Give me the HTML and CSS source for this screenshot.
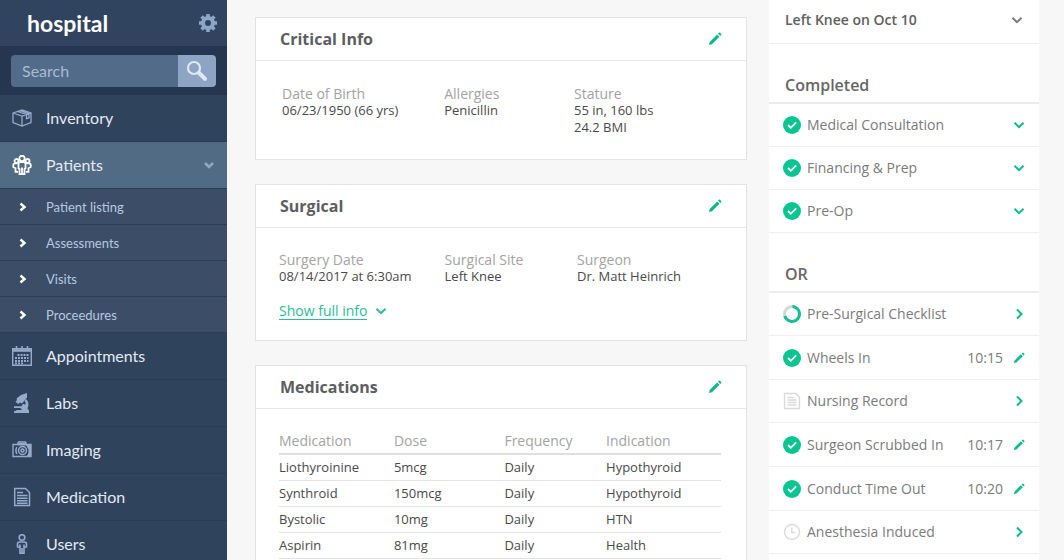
FILE: index.html
```html
<!DOCTYPE html>
<html lang="en">

<head>
	<meta charset="UTF-8">
	<meta name="viewport" content="width=device-width, initial-scale=1">
	<title>hospital</title>
	<link rel="stylesheet" href="styles.css">
</head>

<body>
	<!-- Shared icons -->
	<svg class="sprite" aria-hidden="true">
		<symbol id="pencil" viewBox="0 0 16 16">
			<path d="M1.2 14.8l.7-3.3 8.6-8.6 2.6 2.6-8.6 8.6z" />
			<path d="M11.4 2l1.1-1.1q.6-.5 1.2 0l1.4 1.4q.5.6 0 1.2L14 4.6z" />
		</symbol>
		<symbol id="down" viewBox="0 0 12 12">
			<path d="M1.5 3.8L6 8.2l4.500-4.400" fill="none" stroke="currentColor" stroke-width="2" />
		</symbol>
		<symbol id="right" viewBox="0 0 12 12">
			<path d="M4 1.500L8.500 6 4 10.500" fill="none" stroke="currentColor" stroke-width="2" />
		</symbol>
		<symbol id="bullet" viewBox="0 0 10 10">
			<path d="M2.500 1.500L6.500 5l-4 3.500" fill="none" stroke="currentColor" stroke-width="2.400" />
		</symbol>
		<symbol id="check" viewBox="0 0 18 18">
			<circle cx="9" cy="9" r="9" fill="#08c592" />
			<path d="M5 9l2.800 2.800 5.400-5.400" fill="none" stroke="#fff" stroke-width="1.800" />
		</symbol>
		<symbol id="progress" viewBox="0 0 18 18">
			<circle cx="9" cy="9" r="7.500" fill="none" stroke="#d3d8d7" stroke-width="3" />
			<path d="M9.500 1.500A7.500 7.500 0 1 1 1.800 11" fill="none" stroke="#12c296" stroke-width="3" />
		</symbol>
		<symbol id="record" viewBox="0 0 18 18">
			<path d="M1.500 1.500h11.500l3.500 3.500v11.500h-15zM4.500 5.500h6M4.500 8h9M4.500 10.500h9M4.500 13h9" fill="none" stroke="#d9d9d9" stroke-width="1.300" />
		</symbol>
		<symbol id="clock" viewBox="0 0 18 18">
			<circle cx="9" cy="9" r="7.500" fill="none" stroke="#dcdcdc" stroke-width="1.500" />
			<path d="M8.800 4.500V9.500H12.500" fill="none" stroke="#dcdcdc" stroke-width="1.500" />
		</symbol>
	</svg>

	<div class="app">
		<aside class="sidebar">
			<header class="brand">
				<h1>hospital</h1>
				<button type="button" class="gear" aria-label="Settings">
					<svg viewBox="0 0 20 20">
						<circle cx="10" cy="10" r="5" fill="none" stroke="currentColor" stroke-width="4" />
						<g fill="none" stroke="currentColor" stroke-width="3.600">
							<path d="M10 1v3M10 16v3M1 10h3M16 10h3M3.600 3.600l2.200 2.200M14.200 14.200l2.200 2.200M3.600 16.400l2.200-2.200M14.200 5.800l2.200-2.200" />
						</g>
					</svg>
				</button>
			</header>

			<form class="search">
				<input type="search" placeholder="Search" aria-label="Search">
				<button type="submit" aria-label="Search">
					<svg viewBox="0 0 22 22" fill="none" stroke="currentColor">
						<circle cx="8" cy="8" r="6" stroke-width="2.200" />
						<path d="M12.800 12.800l6.200 6" stroke-width="4" stroke-linecap="round" />
					</svg>
				</button>
			</form>

			<nav>
				<a class="item" href="#">
					<svg viewBox="0 0 20 20" fill="none" stroke="currentColor" stroke-width="1.300">
						<path d="M1 5l9-3 9 3v9.500l-9 3.500-9-3.500zM1 5l9 3 9-3M10 8v10M5.500 3.500l9 3v4l2.500-.8v-4l-9-3" />
					</svg>
					Inventory
				</a>
				<button type="button" class="item active" aria-expanded="true">
					<svg viewBox="0 0 20 20" fill="none" stroke="currentColor" stroke-width="1.800">
						<circle cx="10" cy="3.500" r="2.700" />
						<circle cx="4.500" cy="6" r="2" />
						<circle cx="15.500" cy="6" r="2" />
						<path d="M7.500 19.200V14l-1-.8V9q0-1.800 1.800-1.800h3.400q1.800 0 1.800 1.800v4.200l-1 .8v5.200zM10 12.500v6.700" />
						<path d="M6 16.800H3.500v-3.600L1.300 12v-2q0-1.700 2-1.700H5M14 16.800h2.500v-3.600l2.200-1.200v-2q0-1.700-2-1.700H15" />
					</svg>
					Patients
					<svg class="arrow" viewBox="0 0 12 12"><path d="M2 4l4 4 4-4" fill="none" stroke="currentColor" stroke-width="2.600" /></svg>
				</button>
				<ul class="submenu">
					<li><a href="#"><svg><use href="#bullet" /></svg>Patient listing</a></li>
					<li><a href="#"><svg><use href="#bullet" /></svg>Assessments</a></li>
					<li><a href="#"><svg><use href="#bullet" /></svg>Visits</a></li>
					<li><a href="#"><svg><use href="#bullet" /></svg>Proceedures</a></li>
				</ul>
				<a class="item" href="#">
					<svg viewBox="0 0 20 20" fill="none" stroke="currentColor">
						<path d="M.7 2.700h18.600v16.600H.7z" stroke-width="1.400" />
						<path d="M1 4.500h18" stroke-width="2.500" />
						<path d="M4.500 0v4M10 0v4M15.500 0v4" stroke-width="1.600" />
						<path d="M5.500 9h11M3 12h13.500M3 15h13.500M3 17.300h9" stroke-width="1.800" stroke-dasharray="2 1" />
					</svg>
					Appointments
				</a>
				<a class="item" href="#">
					<svg viewBox="0 0 20 20" fill="currentColor">
						<path d="M12 1l3-1v4.500l-5 6-2-1-1.500 1.500-3-2L5 7l-.5-1.500L9 2z" />
						<path d="M14 6q4 3.500 1.500 9.500l1.500 2v2.500H2v-1.500l3-1.500h5L8.500 15H2v-1.800h7.500l1.500-2.400 2 1q1.500-2-.5-4z" />
					</svg>
					Labs
				</a>
				<a class="item" href="#">
					<svg viewBox="0 0 20 20" fill="none" stroke="currentColor">
						<path d="M1 4.500h4.500L6.500 2h7l1 2.500H19v12H1z" stroke-width="1.400" />
						<path d="M14 5h5v11h-4q2-2.500 1.500-6.500zM6 3h8v2.500H6z" fill="currentColor" stroke="none" />
						<path d="M4.800 7q-2 3.500 0 7" stroke-width="1.300" />
						<circle cx="10.500" cy="10.500" r="4" stroke-width="1.500" />
						<circle cx="10.500" cy="10.500" r="1.500" stroke-width="1.500" />
					</svg>
					Imaging
				</a>
				<a class="item" href="#">
					<svg viewBox="0 0 20 20" fill="none" stroke="currentColor" stroke-width="1.500">
						<path d="M2.700 1.500h10.800l4 4v13H2.700zM5 5.500h6M5 8.500h10.500M5 11.200h10.500M5 13.800h10.500M5 16.200h10.500" />
					</svg>
					Medication
				</a>
				<a class="item" href="#">
					<svg viewBox="0 0 20 20" fill="none" stroke="currentColor" stroke-width="1.600">
						<circle cx="10" cy="3.500" r="2.800" />
						<path d="M8 19.300v-5.500l-2.500-1V10q0-2 2-2h5q2 0 2 2v2.800l-2.500 1v5.500zM10 14v5M8 10.500v3.300M12 10.500v3.300" />
					</svg>
					Users
				</a>
			</nav>
		</aside>

		<main class="cards">
			<section class="card">
				<header>
					<h2>Critical Info</h2>
					<button type="button" aria-label="Edit critical info"><svg><use href="#pencil" /></svg></button>
				</header>
				<dl class="facts critical">
					<div>
						<dt>Date of Birth</dt>
						<dd>06/23/1950 (66 yrs)</dd>
					</div>
					<div>
						<dt>Allergies</dt>
						<dd>Penicillin</dd>
					</div>
					<div>
						<dt>Stature</dt>
						<dd>55 in, 160 lbs</dd>
						<dd>24.2 BMI</dd>
					</div>
				</dl>
			</section>

			<section class="card">
				<header>
					<h2>Surgical</h2>
					<button type="button" aria-label="Edit surgical"><svg><use href="#pencil" /></svg></button>
				</header>
				<dl class="facts">
					<div>
						<dt>Surgery Date</dt>
						<dd>08/14/2017 at 6:30am</dd>
					</div>
					<div>
						<dt>Surgical Site</dt>
						<dd>Left Knee</dd>
					</div>
					<div>
						<dt>Surgeon</dt>
						<dd>Dr. Matt Heinrich</dd>
					</div>
				</dl>
				<a class="more" href="#"><span>Show full info</span><svg><use href="#down" /></svg></a>
			</section>

			<section class="card">
				<header>
					<h2>Medications</h2>
					<button type="button" aria-label="Edit medications"><svg><use href="#pencil" /></svg></button>
				</header>
				<div class="table-wrap">
					<table>
						<colgroup>
							<col class="name">
							<col class="dose">
							<col class="frequency">
							<col>
						</colgroup>
						<thead>
							<tr><th>Medication</th><th>Dose</th><th>Frequency</th><th>Indication</th></tr>
						</thead>
						<tbody>
							<tr><td>Liothyroinine</td><td>5mcg</td><td>Daily</td><td>Hypothyroid</td></tr>
							<tr><td>Synthroid</td><td>150mcg</td><td>Daily</td><td>Hypothyroid</td></tr>
							<tr><td>Bystolic</td><td>10mg</td><td>Daily</td><td>HTN</td></tr>
							<tr><td>Aspirin</td><td>81mg</td><td>Daily</td><td>Health</td></tr>
						</tbody>
					</table>
				</div>
			</section>
		</main>

		<aside class="timeline">
			<div class="picker">
				<select aria-label="Procedure">
					<option>Left Knee on Oct 10</option>
				</select>
				<svg><use href="#down" /></svg>
			</div>

			<h2>Completed</h2>
			<ul>
				<li>
					<svg class="state"><use href="#check" /></svg>
					<span>Medical Consultation</span>
					<button type="button" aria-label="Expand Medical Consultation"><svg><use href="#down" /></svg></button>
				</li>
				<li>
					<svg class="state"><use href="#check" /></svg>
					<span>Financing &amp; Prep</span>
					<button type="button" aria-label="Expand Financing &amp; Prep"><svg><use href="#down" /></svg></button>
				</li>
				<li>
					<svg class="state"><use href="#check" /></svg>
					<span>Pre-Op</span>
					<button type="button" aria-label="Expand Pre-Op"><svg><use href="#down" /></svg></button>
				</li>
			</ul>

			<h2>OR</h2>
			<ul>
				<li>
					<svg class="state"><use href="#progress" /></svg>
					<span>Pre-Surgical Checklist</span>
					<button type="button" aria-label="Open Pre-Surgical Checklist"><svg><use href="#right" /></svg></button>
				</li>
				<li class="timed">
					<svg class="state"><use href="#check" /></svg>
					<span>Wheels In</span>
					<time>10:15</time>
					<button type="button" aria-label="Edit Wheels In"><svg><use href="#pencil" /></svg></button>
				</li>
				<li>
					<svg class="state"><use href="#record" /></svg>
					<span>Nursing Record</span>
					<button type="button" aria-label="Open Nursing Record"><svg><use href="#right" /></svg></button>
				</li>
				<li class="timed">
					<svg class="state"><use href="#check" /></svg>
					<span>Surgeon Scrubbed In</span>
					<time>10:17</time>
					<button type="button" aria-label="Edit Surgeon Scrubbed In"><svg><use href="#pencil" /></svg></button>
				</li>
				<li class="timed">
					<svg class="state"><use href="#check" /></svg>
					<span>Conduct Time Out</span>
					<time>10:20</time>
					<button type="button" aria-label="Edit Conduct Time Out"><svg><use href="#pencil" /></svg></button>
				</li>
				<li>
					<svg class="state"><use href="#clock" /></svg>
					<span>Anesthesia Induced</span>
					<button type="button" aria-label="Open Anesthesia Induced"><svg><use href="#right" /></svg></button>
				</li>
			</ul>
		</aside>
	</div>
</body>

</html>
```
FILE: styles.css
```css
* {
	box-sizing: border-box;
}

body {
	margin: 0;
	background: #f7f7f7;
	color: #4a4a4a;
	font: 13px/17px 'Open Sans', sans-serif;
}

h1, h2, ul, dl, dd {
	margin: 0;
	padding: 0;
}

ul {
	list-style: none;
}

button {
	padding: 0;
	border: 0;
	background: none;
	color: inherit;
	font: inherit;
	cursor: pointer;
}

a {
	color: inherit;
	text-decoration: none;
}

svg {
	display: block;
	flex: none;
}

.sprite {
	position: absolute;
	width: 0;
	height: 0;
}

.app {
	display: grid;
	grid-template-columns: 227px minmax(0, 1fr) 270px;
	height: 100vh;
	padding-right: 25px;
	overflow: hidden;
}

/* Sidebar */
.sidebar {
	background: #30435d;
	color: #e2eaf3;
	font: 16px/20px Lato, sans-serif;
}

.brand {
	display: flex;
	align-items: center;
	justify-content: space-between;
	height: 46px;
	padding: 0 9px 0 27px;
	background: #30445f;
}

.brand h1 {
	color: #fff;
	font-size: 23px;
	font-weight: 700;
	line-height: 26px;
}

.gear {
	color: #8fa7c6;
}

.gear svg {
	width: 20px;
	height: 20px;
}

.search {
	display: flex;
	height: 49px;
	padding: 9px 11px 8px;
	background: #253650;
}

.search input {
	flex: 1;
	min-width: 0;
	padding: 0 11px;
	border: 0;
	border-radius: 4px 0 0 4px;
	background: #526b88;
	color: #fff;
	font: inherit;
}

.search input::placeholder {
	color: #a9bbd3;
	opacity: 1;
}

.search button {
	display: grid;
	place-items: center;
	width: 38px;
	border-radius: 0 4px 4px 0;
	background: #8ea4c4;
	color: #dfe9f5;
}

.search button svg {
	width: 22px;
	height: 22px;
}

.item {
	display: flex;
	align-items: center;
	gap: 14px;
	width: 100%;
	height: 47px;
	padding: 0 12px;
	border-bottom: 1px solid #293b55;
	text-align: left;
}

.item svg {
	width: 20px;
	height: 20px;
	color: #94abc9;
}

.item.active {
	background: #526b84;
}

.item.active svg {
	color: #fff;
}

.item.active .arrow {
	width: 12px;
	height: 12px;
	margin-left: auto;
	color: #8fa7c6;
}

.submenu a {
	display: flex;
	align-items: center;
	gap: 18px;
	height: 36px;
	padding-left: 18px;
	border-bottom: 1px solid #2c3e58;
	background: #3c4e67;
	color: #b5c8e0;
	font-size: 13px;
}

.submenu svg {
	width: 10px;
	height: 10px;
	color: #fff;
}

/* Cards */
.cards {
	display: flex;
	flex-direction: column;
	gap: 24px;
	padding: 17px 22px 0 28px;
}

.card {
	flex: none;
	border: 1px solid #e2e2e2;
	background: #fff;
}

.card header {
	display: flex;
	align-items: center;
	justify-content: space-between;
	height: 43px;
	padding: 0 24px;
	border-bottom: 1px solid #e6e6e6;
}

.card h2 {
	color: #5c5e61;
	font-size: 16px;
	font-weight: 700;
	line-height: 20px;
}

.card header button {
	color: #08b98a;
}

.card header svg {
	width: 14px;
	height: 14px;
	fill: currentColor;
}

.facts {
	display: grid;
	grid-template-columns: 10fr 8fr 9fr;
	padding: 23px 20px 0 23px;
}

.facts.critical {
	padding: 24px 26px 23px;
}

dt, th {
	color: #a3a3a3;
	font-size: 14px;
}

.more {
	display: inline-flex;
	align-items: center;
	gap: 8px;
	margin: 17px 23px 20px;
	color: #2bbd97;
	font-size: 14px;
	line-height: 20px;
}

.more span {
	border-bottom: 1px solid currentColor;
	line-height: 17px;
}

.more svg {
	width: 12px;
	height: 12px;
}

.table-wrap {
	padding: 19px 25px 20px 23px;
}

table {
	width: 100%;
	border-collapse: collapse;
	table-layout: fixed;
}

.name {
	width: 26%;
}

.dose {
	width: 25%;
}

.frequency {
	width: 23%;
}

th, td {
	height: 26px;
	padding: 0;
	border-bottom: 1px solid #e2e2e2;
	text-align: left;
}

th {
	border-bottom: 2px solid #e0e0e0;
	font-weight: 400;
}

/* Timeline */
.timeline {
	background: #fff;
	color: #7b7b7b;
	font-size: 14px;
	line-height: 20px;
}

.picker {
	position: relative;
	height: 44px;
	border-bottom: 1px solid #eee;
}

.picker select {
	width: 100%;
	height: 40px;
	padding: 0 40px 0 16px;
	border: 0;
	appearance: none;
	background: none;
	color: #606060;
	font: inherit;
	font-weight: 600;
}

/* sits over the select */
.picker svg {
	position: absolute;
	top: 14px;
	right: 16px;
	width: 12px;
	height: 12px;
	pointer-events: none;
}

.timeline h2 {
	height: 60px;
	padding: 30px 16px 0;
	border-bottom: 2px solid #ececec;
	color: #666;
	font-size: 16px;
	font-weight: 600;
	line-height: 22px;
}

.timeline li {
	display: flex;
	align-items: center;
	height: 43px;
	padding: 0 14px;
	border-bottom: 1px solid #efefef;
}

.timeline li.timed {
	height: 44px;
}

.timeline li span {
	flex: 1;
	padding-left: 6px;
}

.timeline li button {
	margin-left: 10px;
	color: #08bd8e;
}

.timeline li button svg {
	width: 12px;
	height: 12px;
	fill: currentColor;
}

.timeline .state {
	width: 18px;
	height: 18px;
}
```
